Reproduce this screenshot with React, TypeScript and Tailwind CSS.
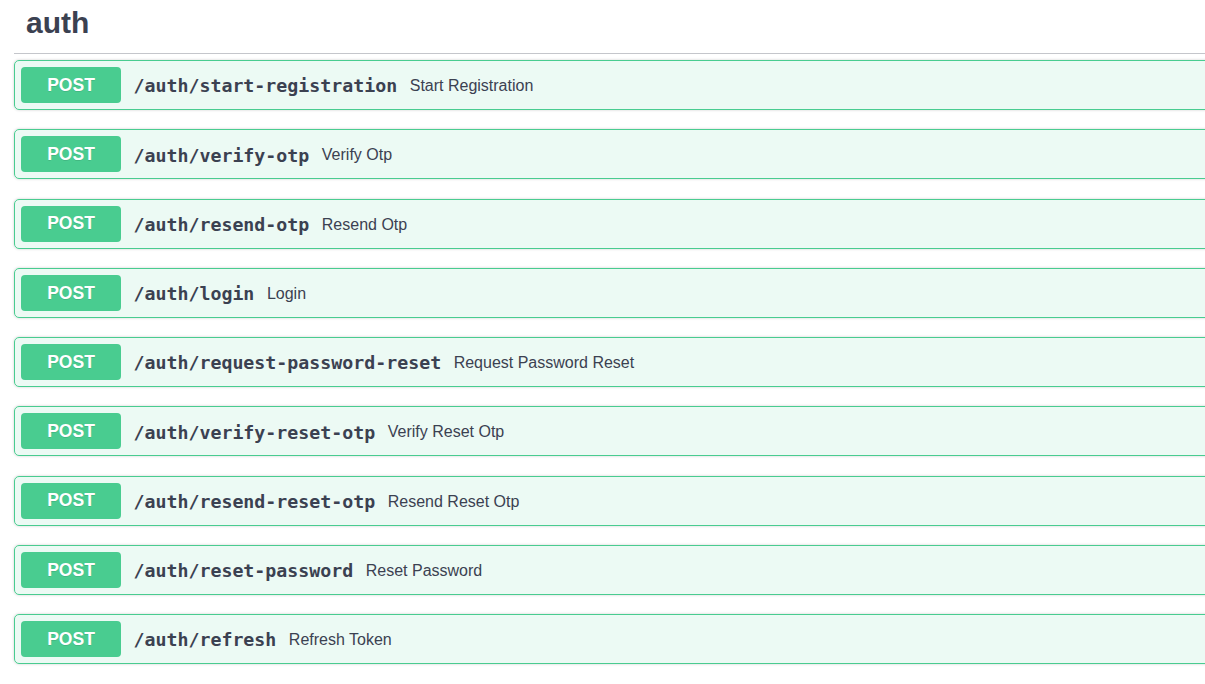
import React from 'react';

const ROUTES = [
  { path: '/auth/start-registration', summary: 'Start Registration' },
  { path: '/auth/verify-otp', summary: 'Verify Otp' },
  { path: '/auth/resend-otp', summary: 'Resend Otp' },
  { path: '/auth/login', summary: 'Login' },
  { path: '/auth/request-password-reset', summary: 'Request Password Reset' },
  { path: '/auth/verify-reset-otp', summary: 'Verify Reset Otp' },
  { path: '/auth/resend-reset-otp', summary: 'Resend Reset Otp' },
  { path: '/auth/reset-password', summary: 'Reset Password' },
  { path: '/auth/refresh', summary: 'Refresh Token' },
];

const App: React.FC = () => {
  return (
    <div className="w-full h-[684px] overflow-hidden bg-white font-['Liberation_Sans',Arial,sans-serif] text-[#3b4151]">
      <div className="ml-[14px] w-[1260px]">
        {/* Tag header */}
        <h3 className="pl-[12px] pt-[6px] pb-[13px] border-b border-[#c4c6cb] text-[30px] leading-[34px] font-bold mb-[6px]">
          auth
        </h3>

        {/* Operations */}
        <div>
          {ROUTES.map((r) => (
            <div
              key={r.path}
              className="flex items-center h-[50px] mb-[19.25px] p-[6px] border border-[#49cc90] rounded-[5px] bg-[rgba(73,204,144,0.1)] shadow-[0_0_3px_rgba(0,0,0,0.19)]"
            >
              <span className="flex items-center justify-center w-[100px] h-[36px] shrink-0 rounded-[4px] bg-[#49cc90] text-white text-[17.5px] font-bold [text-shadow:0_1px_0_rgba(0,0,0,0.1)]">
                POST
              </span>
              <span className="pl-[12.5px] pr-[12.5px] pt-[2px] font-['DejaVu_Sans_Mono',monospace] text-[18.25px] font-bold text-[#3b4151]">
                {r.path}
              </span>
              <span className="pt-[2px] text-[16px] text-[#3b4151]">{r.summary}</span>
            </div>
          ))}
        </div>
      </div>
    </div>
  );
};

export default App;
